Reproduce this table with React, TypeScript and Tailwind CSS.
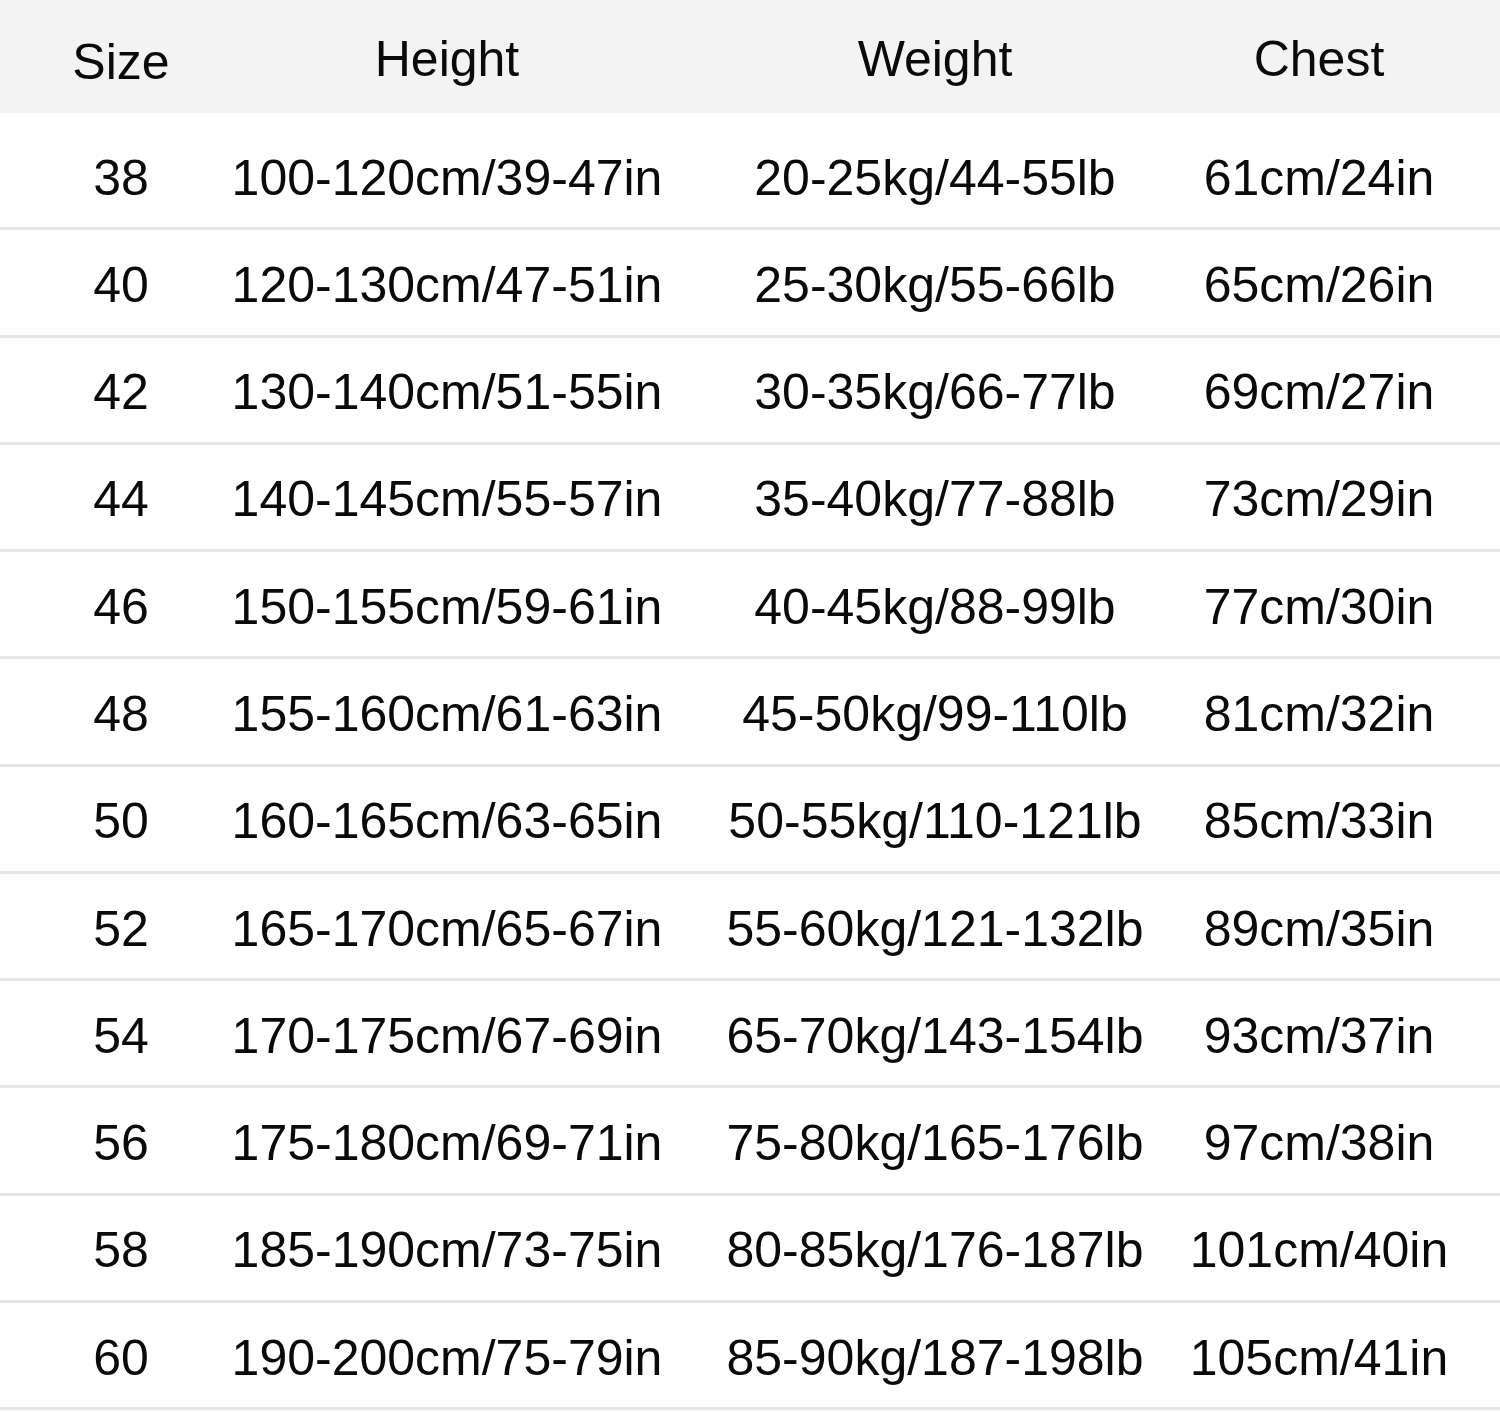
const rows = [
  ["38", "100-120cm/39-47in", "20-25kg/44-55lb", "61cm/24in"],
  ["40", "120-130cm/47-51in", "25-30kg/55-66lb", "65cm/26in"],
  ["42", "130-140cm/51-55in", "30-35kg/66-77lb", "69cm/27in"],
  ["44", "140-145cm/55-57in", "35-40kg/77-88lb", "73cm/29in"],
  ["46", "150-155cm/59-61in", "40-45kg/88-99lb", "77cm/30in"],
  ["48", "155-160cm/61-63in", "45-50kg/99-110lb", "81cm/32in"],
  ["50", "160-165cm/63-65in", "50-55kg/110-121lb", "85cm/33in"],
  ["52", "165-170cm/65-67in", "55-60kg/121-132lb", "89cm/35in"],
  ["54", "170-175cm/67-69in", "65-70kg/143-154lb", "93cm/37in"],
  ["56", "175-180cm/69-71in", "75-80kg/165-176lb", "97cm/38in"],
  ["58", "185-190cm/73-75in", "80-85kg/176-187lb", "101cm/40in"],
  ["60", "190-200cm/75-79in", "85-90kg/187-198lb", "105cm/41in"],
];

// column widths chosen so each text centre lands where the chart has it
const cols = ["w-[242px]", "w-[410px]", "w-[566px]", "w-[202px]"];

function Cell({ width, children, className = "" }: { width: string; children: React.ReactNode; className?: string }) {
  return (
    <div className={`${width} shrink-0 flex justify-center whitespace-nowrap leading-none ${className}`}>
      {children}
    </div>
  );
}

export default function App() {
  return (
    <div
      className="w-[1500px] min-h-[1412px] bg-white text-[#0a0a0a] text-[50px]"
      style={{ fontFamily: '"Liberation Sans", Arial, sans-serif' }}
    >
      <div className="h-[113px] bg-[#f3f3f3] flex items-center pt-[4px]">
        <Cell width={cols[0]} className="pt-[6px]">Size</Cell>
        <Cell width={cols[1]}>Height</Cell>
        <Cell width={cols[2]}>Weight</Cell>
        <Cell width={cols[3]}>Chest</Cell>
      </div>

      {rows.map((r, i) => (
        <div
          key={r[0]}
          className={`flex items-center border-b-[3px] border-[#e6e6e6] ${
            i === 0 ? "h-[117.3px] pt-[16px]" : "h-[107.27px] pt-[5px]"
          }`}
        >
          {r.map((v, j) => (
            <Cell key={j} width={cols[j]}>
              {v}
            </Cell>
          ))}
        </div>
      ))}
    </div>
  );
}
